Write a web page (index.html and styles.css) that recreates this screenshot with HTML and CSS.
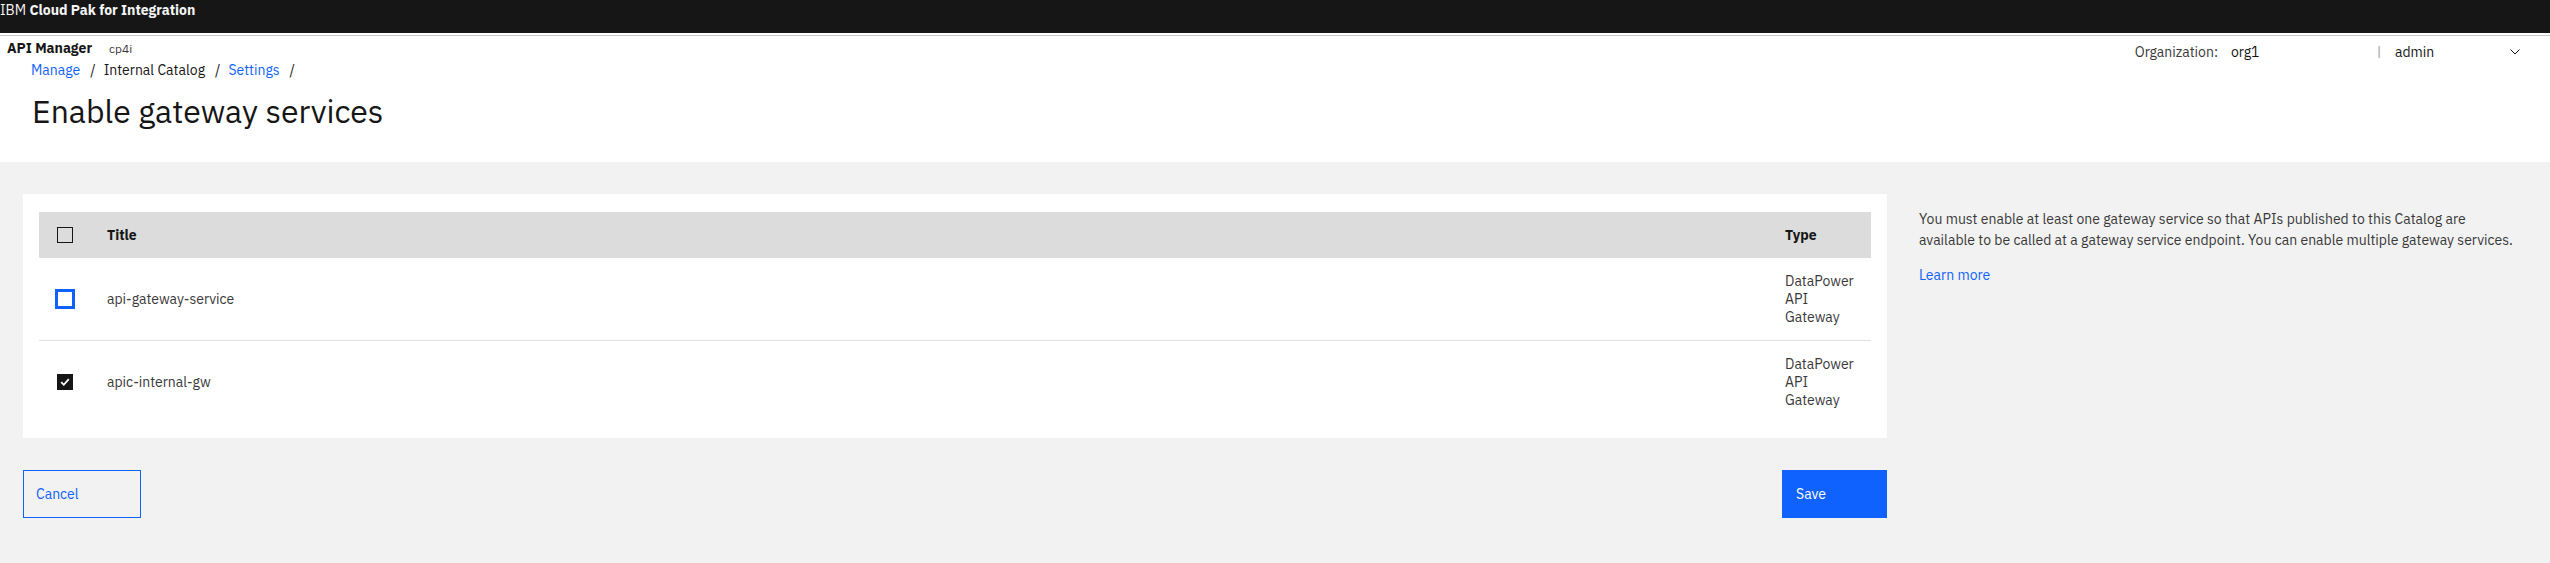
FILE: index.html
```html
<!DOCTYPE html>
<html lang="en">
<head>
<meta charset="utf-8">
<title>Enable gateway services</title>
<link rel="stylesheet" href="styles.css">
</head>
<body>
<header class="topbar"><span class="brand-ibm">IBM</span> <span class="brand-name">Cloud Pak for Integration</span></header>
<div class="masthead">
  <div class="masthead-row">
    <div class="product"><span class="product-name">API Manager</span><span class="product-tag">cp4i</span></div>
    <div class="account">
      <span class="org-label">Organization:</span>
      <span class="org-value">org1</span>
      <span class="divider">|</span>
      <span class="user">admin</span>
      <svg class="chevron" width="10" height="6" viewBox="0 0 10 6"><path d="M0.5 0.5 L5 5 L9.5 0.5" fill="none" stroke="#161616" stroke-width="1"/></svg>
    </div>
  </div>
  <nav class="breadcrumb">
    <a class="crumb-link" href="#">Manage</a><span class="crumb-sep">/</span><span class="crumb-text">Internal Catalog</span><span class="crumb-sep">/</span><a class="crumb-link" href="#">Settings</a><span class="crumb-sep">/</span>
  </nav>
  <h1 class="page-title">Enable gateway services</h1>
</div>
<main class="content">
  <section class="main-col">
    <div class="card">
      <table class="data-table">
        <thead>
          <tr>
            <th class="col-select"><span class="checkbox"></span></th>
            <th class="col-title">Title</th>
            <th class="col-type">Type</th>
          </tr>
        </thead>
        <tbody>
          <tr class="row-first">
            <td class="col-select"><span class="checkbox checkbox-focus"></span></td>
            <td class="col-title">api-gateway-service</td>
            <td class="col-type">DataPower API Gateway</td>
          </tr>
          <tr>
            <td class="col-select"><span class="checkbox checkbox-checked"><svg width="16" height="16" viewBox="0 0 16 16"><polyline points="4.2,8.2 6.8,10.8 11.8,5.2" fill="none" stroke="#ffffff" stroke-width="1.8"/></svg></span></td>
            <td class="col-title">apic-internal-gw</td>
            <td class="col-type">DataPower API Gateway</td>
          </tr>
        </tbody>
      </table>
    </div>
    <div class="actions">
      <button class="btn btn-secondary" type="button">Cancel</button>
      <button class="btn btn-primary" type="button">Save</button>
    </div>
  </section>
  <aside class="side-col">
    <p class="side-text">You must enable at least one gateway service so that APIs published to this Catalog are available to be called at a gateway service endpoint. You can enable multiple gateway services.</p>
    <a class="side-link" href="#">Learn more</a>
  </aside>
</main>
</body>
</html>
```
FILE: styles.css
```css
* { box-sizing: border-box; }

html, body {
  margin: 0;
  padding: 0;
}

body {
  font-family: "IBM Plex Sans", "Liberation Sans", Arial, sans-serif;
  font-size: 14px;
  color: #161616;
  background: #f2f2f2;
  min-height: 563px;
}

.topbar {
  height: 33px;
  background: #161616;
  color: #f4f4f4;
  font-size: 14px;
  line-height: 20px;
  white-space: nowrap;
}

.brand-name { font-weight: 700; }

.masthead {
  background: #ffffff;
  border-top: 2px solid #ffffff;
  padding-bottom: 31px;
}

.masthead-row {
  display: flex;
  justify-content: space-between;
  align-items: flex-start;
  height: 23px;
  border-top: 1px solid #c6c6c6;
  padding-top: 2px;
}

.product {
  display: flex;
  align-items: center;
  height: 20px;
  padding-left: 7px;
}

.product-name {
  font-weight: 700;
  font-size: 14px;
  line-height: 20px;
}

.product-tag {
  font-size: 12px;
  color: #393939;
  margin-left: 17px;
}

.account {
  display: flex;
  align-items: center;
  margin-top: 4px;
  height: 20px;
  padding-right: 30px;
  font-size: 14px;
  line-height: 20px;
}

.org-label {
  color: #393939;
  margin-right: 13px;
}

.org-value {
  width: 146px;
  color: #161616;
}

.divider {
  width: 18px;
  color: #8d8d8d;
  font-size: 13px;
}

.user {
  width: 115px;
  color: #161616;
}

.chevron { display: block; }

.breadcrumb {
  display: flex;
  align-items: center;
  margin-top: 2px;
  padding-left: 31px;
  line-height: 20px;
  font-size: 14px;
}

.crumb-link {
  color: #0f62fe;
  text-decoration: none;
}

.crumb-text { color: #161616; }

.crumb-sep {
  margin: 0 8px 0 10px;
  color: #161616;
}

.page-title {
  margin: 11px 0 0 0;
  padding-left: 32px;
  font-size: 32px;
  line-height: 40px;
  font-weight: 400;
  color: #161616;
}

.content {
  display: flex;
  gap: 32px;
  padding: 32px 32px 0 23px;
}

.main-col {
  flex: 1;
  min-width: 0;
}

.side-col {
  flex: 0 0 599px;
  width: 599px;
}

.card {
  background: #ffffff;
  padding: 18px 16px 15px 16px;
}

.data-table {
  width: 100%;
  border-collapse: separate;
  border-spacing: 0;
}

.data-table th {
  background: #dcdcdc;
  height: 46px;
  padding: 0 16px;
  text-align: left;
  font-weight: 700;
  font-size: 14px;
  color: #161616;
  vertical-align: middle;
}

.data-table td {
  padding: 14px 16px;
  line-height: 18px;
  font-size: 14px;
  color: #393939;
  vertical-align: middle;
}

.data-table .col-select {
  width: 52px;
  padding-left: 18px;
  padding-right: 18px;
}

.data-table .col-type {
  width: 102px;
  padding-left: 16px;
  padding-right: 14px;
}

.row-first td {
  border-bottom: 1px solid #e0e0e0;
}

.checkbox {
  display: block;
  width: 16px;
  height: 16px;
  border: 1px solid #161616;
}

.checkbox-focus {
  border-color: #0f62fe;
  background: #ffffff;
  box-shadow: 0 0 0 2px #0f62fe;
}

.checkbox-checked {
  border: none;
  background: #161616;
}

.checkbox-checked svg { display: block; }

.actions {
  display: flex;
  justify-content: space-between;
  margin-top: 32px;
}

.btn {
  height: 48px;
  font-family: inherit;
  font-size: 14px;
  text-align: left;
  cursor: pointer;
}

.btn-secondary {
  width: 118px;
  padding: 0 0 0 12px;
  background: transparent;
  border: 1px solid #0f62fe;
  color: #0f62fe;
}

.btn-primary {
  width: 105px;
  padding: 0 0 0 13px;
  background: #0f62fe;
  border: 1px solid #0f62fe;
  color: #ffffff;
}

.side-text {
  margin: 15px 0 0 0;
  line-height: 21px;
  font-size: 14px;
  color: #393939;
}

.side-link {
  display: block;
  margin-top: 14px;
  line-height: 21px;
  color: #0f62fe;
  text-decoration: none;
}
```
